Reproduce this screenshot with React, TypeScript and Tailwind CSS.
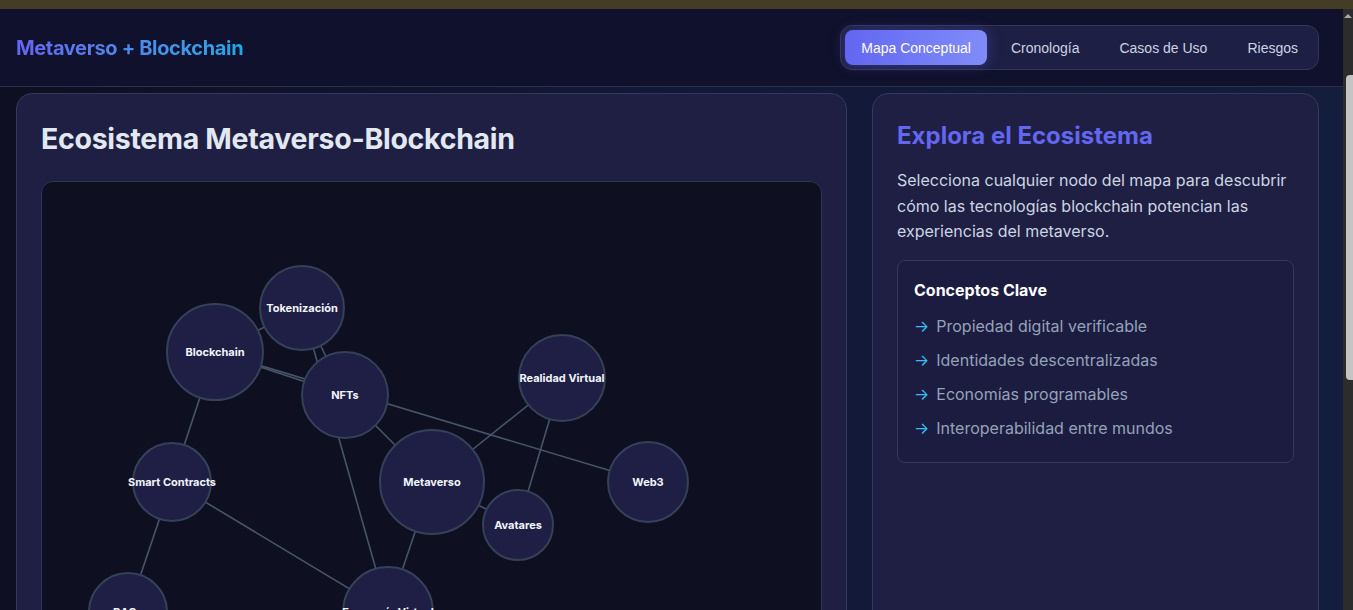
import React, { useState } from 'react';

interface MapNode {
  id: string;
  label: string;
  x: number;
  y: number;
  r: number;
}

const nodes: MapNode[] = [
  { id: 'tok', label: 'Tokenización', x: 260, y: 126, r: 42 },
  { id: 'blk', label: 'Blockchain', x: 173, y: 170, r: 48 },
  { id: 'nft', label: 'NFTs', x: 303, y: 213, r: 43 },
  { id: 'vr', label: 'Realidad Virtual', x: 520, y: 196, r: 43 },
  { id: 'meta', label: 'Metaverso', x: 390, y: 300, r: 52 },
  { id: 'web3', label: 'Web3', x: 606, y: 300, r: 40 },
  { id: 'ava', label: 'Avatares', x: 476, y: 343, r: 35 },
  { id: 'sc', label: 'Smart Contracts', x: 130, y: 300, r: 39 },
  { id: 'dao', label: 'DAOs', x: 86, y: 430, r: 39 },
  { id: 'eco', label: 'Economía Virtual', x: 346, y: 430, r: 45 },
];

const links: [string, string][] = [
  ['blk', 'tok'],
  ['blk', 'nft'],
  ['blk', 'web3'],
  ['blk', 'sc'],
  ['tok', 'nft'],
  ['tok', 'eco'],
  ['nft', 'meta'],
  ['meta', 'vr'],
  ['meta', 'ava'],
  ['meta', 'eco'],
  ['vr', 'ava'],
  ['sc', 'dao'],
  ['sc', 'eco'],
];

const tabs = ['Mapa Conceptual', 'Cronología', 'Casos de Uso', 'Riesgos'];

const concepts = [
  'Propiedad digital verificable',
  'Identidades descentralizadas',
  'Economías programables',
  'Interoperabilidad entre mundos',
];

const ConceptMap = () => {
  const byId = (id: string) => nodes.find(n => n.id === id)!;

  return (
    <svg width="778" height="500" viewBox="0 0 778 500" className="block">
      {links.map(([a, b]) => {
        const from = byId(a);
        const to = byId(b);
        return (
          <line
            key={a + b}
            x1={from.x}
            y1={from.y}
            x2={to.x}
            y2={to.y}
            stroke="#475569"
            strokeWidth="1.6"
          />
        );
      })}
      {nodes.map(node => (
        <g key={node.id}>
          <circle cx={node.x} cy={node.y} r={node.r} fill="#1f1f45" stroke="#344157" strokeWidth="2" />
          <text
            x={node.x}
            y={node.y + 4}
            textAnchor="middle"
            fill="#f1f5f9"
            fontSize="11"
            fontWeight="700"
            fontFamily="Inter, 'Noto Sans', sans-serif"
          >
            {node.label}
          </text>
        </g>
      ))}
    </svg>
  );
};

export default function App() {
  const [active, setActive] = useState('Mapa Conceptual');

  return (
    <div className="h-[610px] overflow-hidden flex flex-col bg-[#0f1023] font-['Inter',_'Noto_Sans',_sans-serif]">
      {/* browser strip */}
      <div className="h-[9px] bg-[#443d25] shrink-0" />

      <div className="flex flex-1 min-h-0">
        <div className="flex-1 min-w-0 flex flex-col bg-linear-to-r from-[#0e0f22] via-[#121838] to-[#141d3b]">
          {/* Header */}
          <header className="h-[78px] shrink-0 flex items-center justify-between pl-4 pr-6 bg-[#10112c] border-b border-[#2a2f4d]">
            <h1 className="text-xl font-bold tracking-[-0.35px] bg-linear-to-r from-[#6366f1] to-[#1ea7e6] bg-clip-text text-transparent">
              Metaverso + Blockchain
            </h1>
            <nav className="flex gap-2 p-1 rounded-xl bg-[#1e1f45] border border-[#31365a]">
              {tabs.map(tab => (
                <button
                  key={tab}
                  onClick={() => setActive(tab)}
                  className={
                    tab === active
                      ? "h-[35px] px-4 rounded-lg text-sm text-white font-['Liberation_Sans',_Arial,_sans-serif] bg-linear-to-r from-[#6366f1] to-[#818cf8] shadow-[0_0_14px_rgba(99,102,241,0.35)]"
                      : "h-[35px] px-4 rounded-lg text-sm text-[#cbd5e1] font-['Liberation_Sans',_Arial,_sans-serif]"
                  }
                >
                  {tab}
                </button>
              ))}
            </nav>
          </header>

          {/* Main */}
          <main className="flex-1 min-h-0 flex items-start gap-[25px] pl-4 pr-6 pt-[6px]">
            <section className="flex-1 min-w-0 h-[620px] shrink-0 rounded-2xl border border-[#343a5e] bg-[#1f1f44] px-6 pt-[27px]">
              <h2 className="text-[28.5px] leading-9 font-bold text-[#e2e8f0] tracking-[-0.3px]">
                Ecosistema Metaverso-Blockchain
              </h2>
              <div className="mt-[24px] rounded-xl border border-[#2c3553] bg-[#0e0f20] overflow-hidden">
                <ConceptMap />
              </div>
            </section>

            <aside className="w-[447px] h-[620px] shrink-0 rounded-2xl border border-[#343a5e] bg-[#1f1f44] px-6 pt-[26px]">
              <h2 className="text-2xl leading-8 font-bold text-[#6366f1]">Explora el Ecosistema</h2>
              <p className="mt-4 text-base leading-[25.7px] text-[#cbd5e1]">
                Selecciona cualquier nodo del mapa para descubrir cómo las tecnologías blockchain potencian las experiencias del metaverso.
              </p>
              <div className="mt-[15px] rounded-lg border border-[#313a58] bg-[#1c1c40] px-4 pt-[17px] pb-[22px]">
                <h3 className="text-base leading-6 font-bold text-white">Conceptos Clave</h3>
                <ul className="mt-3 flex flex-col gap-[9.8px]">
                  {concepts.map(c => (
                    <li key={c} className="flex items-center text-base leading-6 text-[#94a3b8]">
                      <span className="text-[#38bdf8] text-base mr-[7px]">→</span>
                      {c}
                    </li>
                  ))}
                </ul>
              </div>
            </aside>
          </main>
        </div>

        {/* scrollbar */}
        <div className="w-[10px] shrink-0 bg-[#2c2c2c] flex flex-col items-center">
          <div className="mt-[5px] w-0 h-0 border-l-[4px] border-r-[4px] border-b-[4px] border-l-transparent border-r-transparent border-b-[#a8a8a8]" />
          <div className="mt-[57px] w-[7px] ml-[3px] h-[305px] rounded-l-sm bg-[#c4c4c4]" />
        </div>
      </div>
    </div>
  );
}
